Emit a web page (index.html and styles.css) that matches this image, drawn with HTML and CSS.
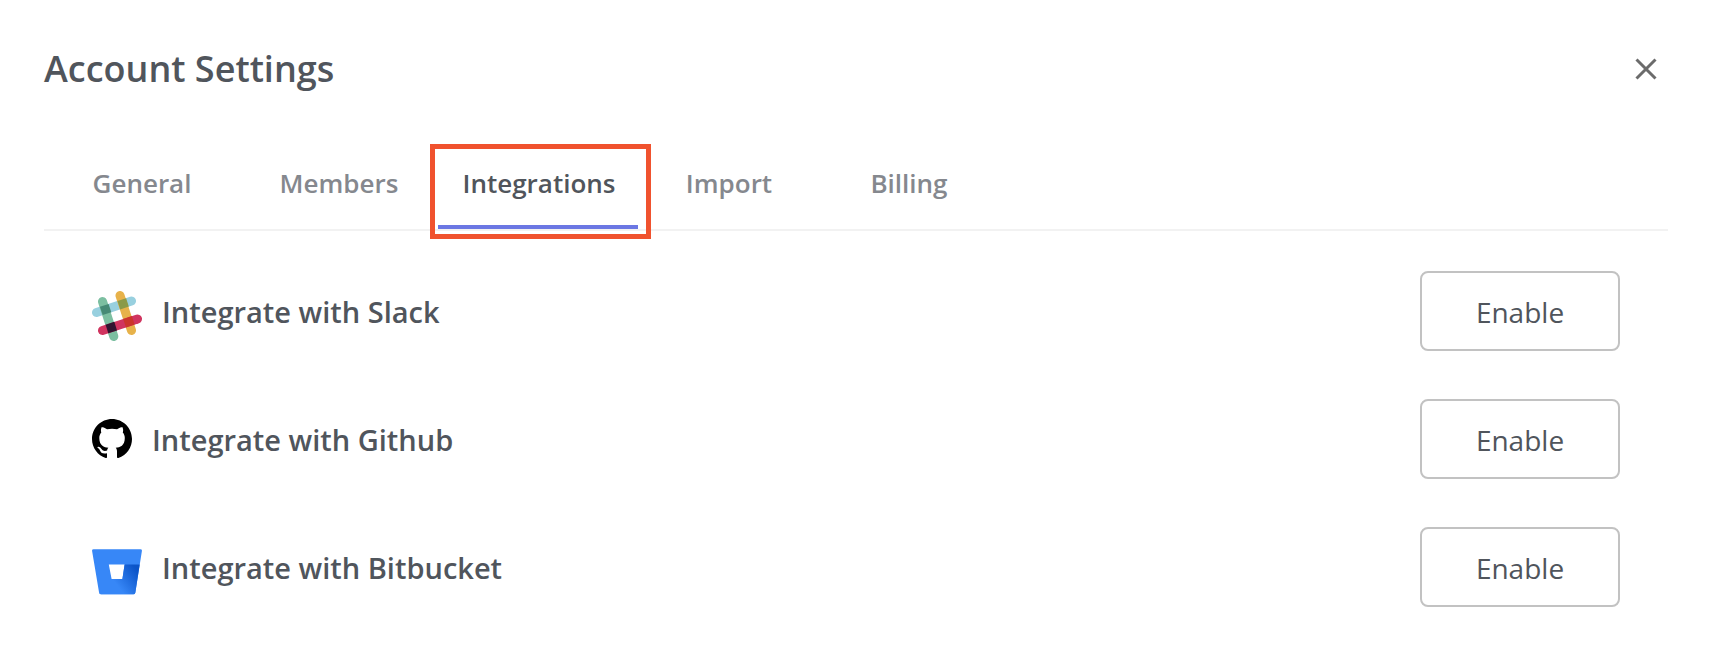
FILE: index.html
```html
<!DOCTYPE html>
<html lang="en">
<head>
<meta charset="utf-8">
<title>Account Settings</title>
<link rel="stylesheet" href="styles.css">
</head>
<body>
<main class="settings">
  <header class="header">
    <h1 class="title">Account Settings</h1>
    <button class="close" type="button" aria-label="Close">
      <svg width="24" height="24" viewBox="0 0 24 24" fill="none" stroke="#6b6b6b" stroke-width="3"><path d="M2.5 2.5l19 19M21.5 2.5l-19 19"/></svg>
    </button>
  </header>
  <nav class="tabs">
    <a class="tab tab--first" href="#general">General</a>
    <a class="tab tab--wide" href="#members">Members</a>
    <a class="tab tab--wide tab--active" href="#integrations" aria-current="page">Integrations<span class="highlight"></span></a>
    <a class="tab" href="#import">Import</a>
    <a class="tab" href="#billing">Billing</a>
  </nav>
  <ul class="list">
    <li class="row">
      <svg class="icon icon--large" viewBox="0 0 50 50" stroke-width="9" stroke-linecap="round" aria-hidden="true">
        <path stroke="#98d0df" d="M4.5 21.5L39.5 10"/>
        <path stroke="#e7b24a" d="M28 4.500L39.500 39.500"/>
        <path stroke="#7cbfa1" d="M10.500 10.500L21.800 45.500"/>
        <path stroke="#d0345f" d="M10.500 39.500L45.500 28"/>
        <g stroke="none">
          <path fill="#468a75" d="M7.900 15.700L16.600 12.900L19.300 21.300L10.700 24.100Z"/>
          <path fill="#8a9a48" d="M25.500 10L34.100 7.200L36.800 15.600L28.200 18.400Z"/>
          <path fill="#321430" d="M13.600 33.700L22.300 30.800L25 39.400L16.300 42.200Z"/>
          <path fill="#cb352c" d="M31.200 28L39.900 25.100L42.600 33.600L34 36.500Z"/>
        </g>
      </svg>
      <span class="name" id="slack">Integrate with Slack</span>
      <button class="enable" type="button" aria-describedby="slack">Enable</button>
    </li>
    <li class="row">
      <svg class="icon" viewBox="0 0 16 16" aria-hidden="true"><path d="M8 0C3.580 0 0 3.580 0 8c0 3.540 2.290 6.530 5.470 7.590.4.070.55-.17.55-.38 0-.19-.01-.82-.01-1.490-2.010.37-2.530-.49-2.690-.94-.09-.23-.48-.94-.82-1.130-.28-.15-.68-.52-.01-.53.63-.01 1.080.58 1.230.82.72 1.210 1.870.87 2.330.66.070-.52.28-.87.51-1.070-1.780-.2-3.640-.89-3.640-3.950 0-.87.31-1.590.82-2.150-.08-.2-.36-1.020.08-2.120 0 0 .67-.21 2.200.82.64-.18 1.320-.27 2-.27s1.360.09 2 .27c1.530-1.040 2.200-.82 2.200-.82.44 1.100.16 1.920.08 2.120.51.56.82 1.270.82 2.150 0 3.070-1.870 3.750-3.650 3.950.29.25.54.73.54 1.480 0 1.070-.01 1.930-.01 2.200 0 .21.15.46.55.38A8.010 8.010 0 0 0 16 8c0-4.420-3.580-8-8-8z"/></svg>
      <span class="name" id="github">Integrate with Github</span>
      <button class="enable" type="button" aria-describedby="github">Enable</button>
    </li>
    <li class="row">
      <svg class="icon icon--large" viewBox="0 0 50 50" aria-hidden="true">
        <defs><linearGradient id="fold" gradientUnits="userSpaceOnUse" x1="48" y1="20" x2="25" y2="38"><stop offset=".15" stop-color="#0b54c8"/><stop offset="1" stop-color="#3787f7"/></linearGradient></defs>
        <path fill="#3787f7" fill-rule="evenodd" d="M1.600 2.300H48.400Q50.200 2.300 49.900 4L43.300 45.700Q43 47.300 41.400 47.300H9Q7.400 47.300 7.100 45.700L.1 4Q-.2 2.300 1.600 2.300ZM16.800 17.500L19.600 32H30.400L32.600 17.500Z"/>
        <path fill="url(#fold)" d="M32.600 17.500H47.700L43.300 45.700Q43 47.300 41.400 47.300H9L7.500 46.500L19.600 32H30.400Z"/>
      </svg>
      <span class="name" id="bitbucket">Integrate with Bitbucket</span>
      <button class="enable" type="button" aria-describedby="bitbucket">Enable</button>
    </li>
  </ul>
</main>
</body>
</html>
```
FILE: styles.css
```css
* {
  box-sizing: border-box;
}

body {
  margin: 0;
  background: #fff;
  color: #50555c;
  font-family: "Open Sans", "Noto Sans", sans-serif;
}

.settings {
  padding: 44px;
}

.header {
  display: flex;
  align-items: center;
  justify-content: space-between;
  height: 50px;
}

.title {
  margin: 0;
  font-size: 36px;
  line-height: 50px;
  font-weight: 600;
}

.close {
  display: flex;
  padding: 10px;
  border: 0;
  background: none;
}

.tabs {
  display: flex;
  height: 93px;
  margin-top: 44px;
  border-bottom: 2px solid #f2f2f2;
}

.tab {
  position: relative;
  width: 180px;
  padding: 27px 0 0 2px;
  border-bottom: 4px solid transparent;
  color: #85888e;
  font-size: 26px;
  line-height: 36px;
  font-weight: 600;
  text-align: center;
  text-decoration: none;
}

.tab--first {
  width: 194px;
}

.tab--wide {
  width: 200px;
}

.tab--active {
  border-bottom-color: #6b77e3;
  color: #50555c;
}

.highlight {
  position: absolute;
  top: 6px;
  right: -13px;
  bottom: -14px;
  left: -8px;
  border: 5px solid #f0522e;
}

.list {
  display: flex;
  flex-direction: column;
  gap: 48px;
  margin: 0;
  padding: 40px 48px 0;
  list-style: none;
}

.row {
  display: flex;
  align-items: center;
}

.icon {
  width: 40px;
  height: 40px;
  margin-right: 20px;
}

.icon--large {
  width: 50px;
  height: 50px;
  margin-top: 10px;
}

.name {
  flex: 1;
  padding-top: 2px;
  font-size: 29px;
  line-height: 40px;
  font-weight: 600;
}

.enable {
  width: 200px;
  height: 80px;
  padding: 2px 0 0;
  border: 2px solid #c2c2c2;
  border-radius: 8px;
  background: #fff;
  color: #50555c;
  font-family: inherit;
  font-size: 28px;
}
```
